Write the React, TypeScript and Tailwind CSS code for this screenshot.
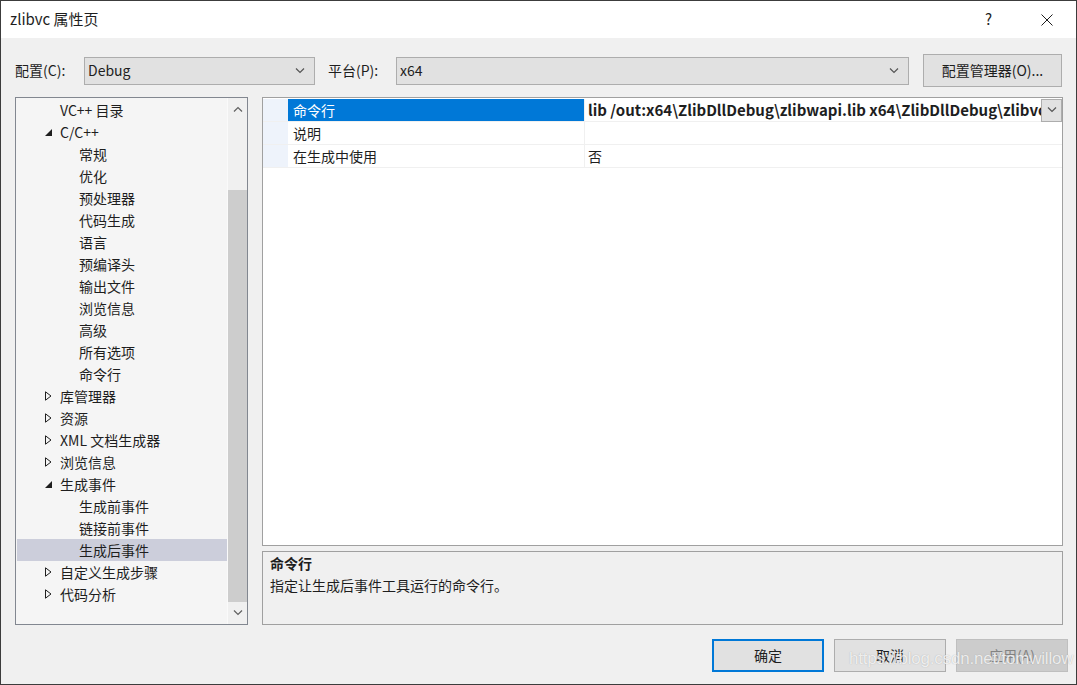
import React from "react";

type TreeItem = { label: string; level: 1 | 2; arrow?: "open" | "closed"; selected?: boolean };

const tree: TreeItem[] = [
  { label: "VC++ 目录", level: 1 },
  { label: "C/C++", level: 1, arrow: "open" },
  { label: "常规", level: 2 },
  { label: "优化", level: 2 },
  { label: "预处理器", level: 2 },
  { label: "代码生成", level: 2 },
  { label: "语言", level: 2 },
  { label: "预编译头", level: 2 },
  { label: "输出文件", level: 2 },
  { label: "浏览信息", level: 2 },
  { label: "高级", level: 2 },
  { label: "所有选项", level: 2 },
  { label: "命令行", level: 2 },
  { label: "库管理器", level: 1, arrow: "closed" },
  { label: "资源", level: 1, arrow: "closed" },
  { label: "XML 文档生成器", level: 1, arrow: "closed" },
  { label: "浏览信息", level: 1, arrow: "closed" },
  { label: "生成事件", level: 1, arrow: "open" },
  { label: "生成前事件", level: 2 },
  { label: "链接前事件", level: 2 },
  { label: "生成后事件", level: 2, selected: true },
  { label: "自定义生成步骤", level: 1, arrow: "closed" },
  { label: "代码分析", level: 1, arrow: "closed" },
];

const props = [
  { name: "命令行", value: "lib /out:x64\\ZlibDllDebug\\zlibwapi.lib x64\\ZlibDllDebug\\zlibvc.lib", active: true },
  { name: "说明", value: "" },
  { name: "在生成中使用", value: "否" },
];

const Chevron = ({ up = false, color = "#606060" }: { up?: boolean; color?: string }) => (
  <svg width="10" height="6" viewBox="0 0 10 6">
    <path d={up ? "M1 5.5 L5 1.5 L9 5.5" : "M1 0.5 L5 4.5 L9 0.5"} fill="none" stroke={color} strokeWidth="1.2" />
  </svg>
);

const Arrow = ({ kind }: { kind?: "open" | "closed" }) => {
  if (!kind) return <span className="w-[16px]" />;
  return (
    <span className="w-[16px] flex items-center justify-center">
      {kind === "open" ? (
        <svg width="7" height="7" viewBox="0 0 7 7">
          <path d="M7 0 L7 7 L0 7 Z" fill="#1e1e1e" />
        </svg>
      ) : (
        <svg width="7" height="10" viewBox="0 0 7 10">
          <path d="M0.5 0.8 L6 5 L0.5 9.2 Z" fill="none" stroke="#1e1e1e" strokeWidth="1" />
        </svg>
      )}
    </span>
  );
};

const Select = ({ value, width }: { value: string; width: string }) => (
  <div className={`${width} h-[28px] border border-[#adadad] bg-[#e1e1e1] flex items-center justify-between pl-[3px] pr-[9px]`}>
    <span className="text-[14px] text-[#1e1e1e]">{value}</span>
    <Chevron color="#555" />
  </div>
);

export default function App() {
  return (
    <div
      className="relative w-[1077px] h-[685px] border border-[#3c3c3c] bg-[#f0f0f0] flex flex-col text-[#1e1e1e] overflow-hidden"
      style={{ fontFamily: '"Noto Sans CJK SC", "Noto Sans", sans-serif' }}
    >
      {/* title bar */}
      <div className="h-[37px] bg-white flex items-center justify-between pl-[9px] pr-[23px] shrink-0">
        <span className="text-[15px]">zlibvc 属性页</span>
        <div className="flex items-center gap-[49px]">
          <span className="text-[15px]">?</span>
          <svg width="12" height="12" viewBox="0 0 12 12">
            <path d="M0.5 0.5 L11.5 11.5 M11.5 0.5 L0.5 11.5" stroke="#1e1e1e" strokeWidth="1" />
          </svg>
        </div>
      </div>

      {/* config row */}
      <div className="flex items-center pl-[14px] pr-[14px] mt-[16px] h-[33px] text-[14px]">
        <span className="w-[69px]">配置(C):</span>
        <Select value="Debug" width="w-[231px]" />
        <span className="ml-[13px] w-[68px]">平台(P):</span>
        <Select value="x64" width="w-[513px]" />
        <div className="ml-[14px] w-[139px] h-[33px] border border-[#adadad] bg-[#e1e1e1] flex items-center justify-center">
          配置管理器(O)...
        </div>
      </div>

      {/* panels */}
      <div className="flex mt-[10px] pl-[14px] h-[528px]">
        {/* tree */}
        <div className="w-[233px] h-full border border-[#828790] bg-[#f5f5f5] flex">
          <div className="flex-1 pt-[1px] pl-[1px] flex flex-col">
            {tree.map((t, i) => (
              <div
                key={i}
                className={`h-[22px] flex items-center text-[14px] ${t.selected ? "bg-[#cccedb]" : ""}`}
                style={{ paddingLeft: t.level === 1 ? 23 : 62 }}
              >
                {t.level === 1 && <Arrow kind={t.arrow} />}
                <span className={t.level === 1 ? "ml-[4px]" : ""}>{t.label}</span>
              </div>
            ))}
          </div>
          <div className="w-[20px] bg-[#f0f0f0] flex flex-col border-l border-[#fafafa]">
            <div className="h-[21px] flex items-center justify-center">
              <Chevron up />
            </div>
            <div className="h-[71px]" />
            <div className="h-[412px] bg-[#cdcdcd]" />
            <div className="flex-1 flex items-center justify-center">
              <Chevron />
            </div>
          </div>
        </div>

        {/* right side */}
        <div className="ml-[14px] w-[801px] flex flex-col">
          <div className="h-[449px] border border-[#a0a0a0] bg-white pt-[1px]">
            {props.map((p, i) => (
              <div key={i} className="h-[23px] flex border-b border-[#f0f0f0] text-[14px]">
                <div className="w-[25px] bg-[#eef3fb]" />
                <div
                  className={`w-[297px] flex items-center pl-[5px] border-r border-[#f0f0f0] ${
                    p.active ? "bg-[#0078d7] text-white" : ""
                  }`}
                >
                  {p.name}
                </div>
                <div className="flex-1 min-w-0 flex items-center">
                  <span
                    className={`flex-1 pl-[3px] whitespace-nowrap overflow-hidden ${p.active ? "font-bold text-[15px]" : ""}`}
                  >
                    {p.value}
                  </span>
                  {p.active && (
                    <div className="w-[21px] h-[23px] border border-[#adadad] bg-[#e1e1e1] flex items-center justify-center">
                      <Chevron color="#555" />
                    </div>
                  )}
                </div>
              </div>
            ))}
          </div>
          <div className="mt-[5px] h-[74px] border border-[#a0a0a0] pl-[7px] text-[14px]">
            <div className="font-bold h-[22px] flex items-center">命令行</div>
            <div className="h-[22px] flex items-center">指定让生成后事件工具运行的命令行。</div>
          </div>
        </div>
      </div>

      {/* buttons */}
      <div className="flex justify-end pr-[8px] mt-[14px] gap-[10px] text-[14px]">
        <div className="w-[112px] h-[33px] border-2 border-[#0078d7] bg-[#e1e1e1] flex items-center justify-center">确定</div>
        <div className="w-[112px] h-[33px] border border-[#adadad] bg-[#e1e1e1] flex items-center justify-center">取消</div>
        <div className="w-[112px] h-[33px] border border-[#bfbfbf] bg-[#cccccc] text-[#838383] flex items-center justify-center">
          应用(A)
        </div>
      </div>

      {/* watermark */}
      <div
        className="absolute left-[848px] top-[645px] text-[17px] tracking-[-0.2px] whitespace-nowrap text-white/80 pointer-events-none"
        style={{ fontFamily: '"Liberation Sans", sans-serif', textShadow: "0 0 1px rgba(120,120,120,0.6)" }}
      >
        https://blog.csdn.net/tomwillow
      </div>
    </div>
  );
}
